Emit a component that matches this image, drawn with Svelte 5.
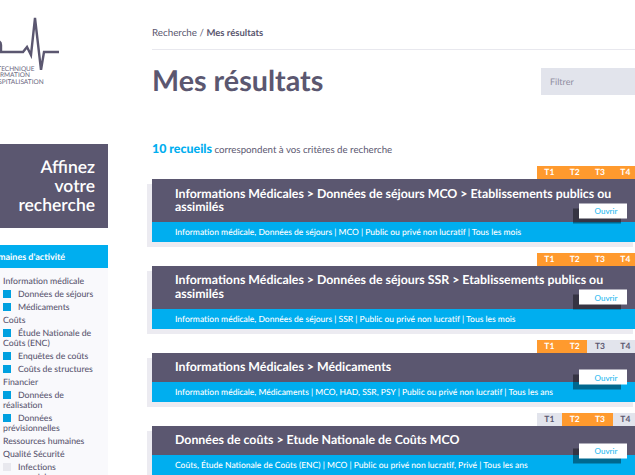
<script>
  const groups = [
    { type: "head", label: "Information médicale" },
    { type: "check", label: "Données de séjours", on: true },
    { type: "check", label: "Médicaments", on: true },
    { type: "head", label: "Coûts" },
    { type: "check", label: "Étude Nationale de Coûts (ENC)", on: true },
    { type: "check", label: "Enquêtes de coûts", on: true },
    { type: "check", label: "Coûts de structures", on: true },
    { type: "head", label: "Financier" },
    { type: "check", label: "Données de réalisation", on: true },
    { type: "check", label: "Données prévisionnelles", on: true },
    { type: "head", label: "Ressources humaines" },
    { type: "head", label: "Qualité Sécurité" },
    { type: "check", label: "Infections nosocomiales", on: false },
  ];

  const results = [
    {
      title: "Informations Médicales > Données de séjours MCO > Etablissements publics ou assimilés",
      meta: "Information médicale, Données de séjours | MCO | Public ou privé non lucratif | Tous les mois",
      tabs: [true, true, true, true],
    },
    {
      title: "Informations Médicales > Données de séjours SSR > Etablissements publics ou assimilés",
      meta: "Information médicale, Données de séjours | SSR | Public ou privé non lucratif | Tous les mois",
      tabs: [true, true, true, true],
    },
    {
      title: "Informations Médicales > Médicaments",
      meta: "Information médicale, Médicaments | MCO, HAD, SSR, PSY | Public ou privé non lucratif | Tous les ans",
      tabs: [true, true, false, false],
    },
    {
      title: "Données de coûts > Etude Nationale de Coûts MCO",
      meta: "Coûts, Étude Nationale de Coûts (ENC) | MCO | Public ou privé non lucratif, Privé | Tous les ans",
      tabs: [false, true, true, false],
    },
  ];
</script>

<div class="page">
  <aside class="sidebar">
    <div class="logo">
      <svg class="pulse" width="90" height="60" viewBox="0 0 90 60" aria-hidden="true">
        <path d="M31 42V35Q31 31 27 31H22M22 42H53L57 37L61 45L65 8L71 60L74 42H89" fill="none" stroke="#5b5770" stroke-width="2.4" />
      </svg>
      <div class="logo-text">
        <span class="l1">AGENCE TECHNIQUE</span>
        <span class="l2">DE L'INFORMATION</span>
        <span class="l3">SUR L'HOSPITALISATION</span>
      </div>
    </div>

    <h2 class="refine">Affinez<br />votre<br />recherche</h2>

    <h3 class="domain">Domaines d'activité</h3>
    <ul class="filters">
      {#each groups as g}
        {#if g.type === "head"}
          <li class="head">{g.label}</li>
        {:else}
          <li class="check">
            <span class="box" class:on={g.on}></span>{g.label}
          </li>
        {/if}
      {/each}
    </ul>
  </aside>

  <main class="main">
    <div class="crumbs">Recherche / <strong>Mes résultats</strong></div>
    <div class="top">
      <h1>Mes résultats</h1>
      <div class="filter">Filtrer</div>
    </div>
    <p class="count"><strong>10 recueils</strong> correspondent à vos critères de recherche</p>

    {#each results as r}
      <article class="result">
        <div class="tabs">
          {#each r.tabs as on, i}
            <span class="tab" class:on>T{i + 1}</span>
          {/each}
        </div>
        <div class="card">
          <h4>{r.title}</h4>
          <p>{r.meta}</p>
          <button class="open">Ouvrir</button>
        </div>
      </article>
    {/each}
  </main>
</div>

<style>
  :global(body) {
    overflow: hidden;
    background: #fff;
  }

  .page {
    display: flex;
    align-items: flex-start;
    width: 668px;
    height: 475px;
    margin-left: -30px;
    overflow: hidden;
    font-family: Lato, "Open Sans", sans-serif;
    text-rendering: geometricPrecision;
    color: #5b5770;
  }

  .sidebar {
    flex: none;
    width: 138px;
  }

  .logo {
    height: 144px;
    overflow: hidden;
  }

  .pulse {
    display: block;
    margin-top: 10px;
  }

  .logo-text {
    display: flex;
    flex-direction: column;
    width: 65px;
    margin-top: -3.5px;
    font-size: 6.5px;
    line-height: 6.5px;
    font-weight: 400;
    text-align: right;
    white-space: nowrap;
    color: #6b6880;
  }

  .l1 {
    padding-right: 3px;
  }

  .l2 {
    padding-right: 9px;
  }

  .refine {
    margin: 0;
    height: 84px;
    box-sizing: border-box;
    padding: 13px 13px 0 0;
    background: #5b5770;
    color: #fff;
    text-align: right;
    font-size: 17.5px;
    line-height: 19px;
    font-weight: 600;
  }

  .domain {
    margin: 17px 0 0;
    height: 23px;
    padding-left: 16px;
    background: #00aeef;
    color: #fff;
    font-size: 9px;
    line-height: 23px;
    font-weight: 700;
  }

  .filters {
    list-style: none;
    margin: 0;
    padding: 6px 9px 0 33px;
    background: #f9f9fc;
    font-size: 8.7px;
    line-height: 10px;
    font-weight: 500;
    height: 201px;
  }

  .head {
    padding: 1.5px 0;
  }

  .check {
    padding: 1.5px 0;
  }

  .box {
    display: inline-block;
    width: 8px;
    height: 8px;
    margin-right: 7px;
    vertical-align: -1px;
    background: #e8e8ee;
  }

  .box.on {
    background: #00a0e0;
  }

  .main {
    flex: none;
    width: 486px;
    margin-left: 44px;
  }

  .crumbs {
    height: 50px;
    box-sizing: border-box;
    padding-top: 27px;
    border-bottom: 1px solid #e8e8ee;
    font-size: 9.8px;
    line-height: 12px;
  }

  .crumbs strong {
    font-size: 9.5px;
    font-weight: 700;
  }

  .top {
    display: flex;
    justify-content: space-between;
    align-items: center;
    height: 27px;
    margin-top: 18px;
  }

  h1 {
    margin: -2px 0 0;
    font-size: 28.7px;
    line-height: 34px;
    font-weight: 700;
  }

  .filter {
    width: 97px;
    height: 27px;
    box-sizing: border-box;
    padding-left: 9px;
    background: #e2e4ec;
    color: #8f8da0;
    font-size: 9px;
    line-height: 27px;
  }

  .count {
    height: 15px;
    margin: 47px 0 0;
    font-size: 9.7px;
    line-height: 14px;
  }

  .count strong {
    color: #00aeef;
    font-size: 12.4px;
    font-weight: 900;
  }

  .result {
    margin-top: 9px;
  }

  .tabs {
    display: flex;
    justify-content: flex-end;
  }

  .tab {
    width: 25.33px;
    height: 13px;
    background: #e2e4ec;
    color: #5b5770;
    font-size: 8.5px;
    line-height: 13px;
    text-align: center;
    font-weight: 700;
  }

  .tab.on {
    background: #ff9a2e;
    color: #fff;
  }

  .card {
    position: relative;
    margin-bottom: 10.8px;
  }

  .card::before {
    content: "";
    position: absolute;
    z-index: -1;
    top: 5px;
    left: -5px;
    right: 5px;
    bottom: -5px;
    background: #ecebf1;
  }

  h4 {
    margin: 0;
    padding: 7.5px 23px 8.5px;
    background: #5b5770;
    color: #fff;
    font-size: 12.35px;
    line-height: 13.5px;
    font-weight: 700;
  }

  .card p {
    margin: 0;
    height: 20px;
    padding-left: 23px;
    background: #00aeef;
    color: #fff;
    font-size: 8.5px;
    line-height: 20px;
    font-weight: 500;
  }

  .open {
    position: absolute;
    right: 11px;
    top: 50%;
    transform: translateY(-50%);
    width: 48px;
    height: 15px;
    padding: 0 0 0 6px;
    border: 0;
    background: #fff;
    box-shadow: -6px 5px 0 rgba(0, 0, 0, 0.4);
    color: #28b9f0;
    font-family: inherit;
    font-size: 8px;
    font-weight: 500;
  }
</style>
